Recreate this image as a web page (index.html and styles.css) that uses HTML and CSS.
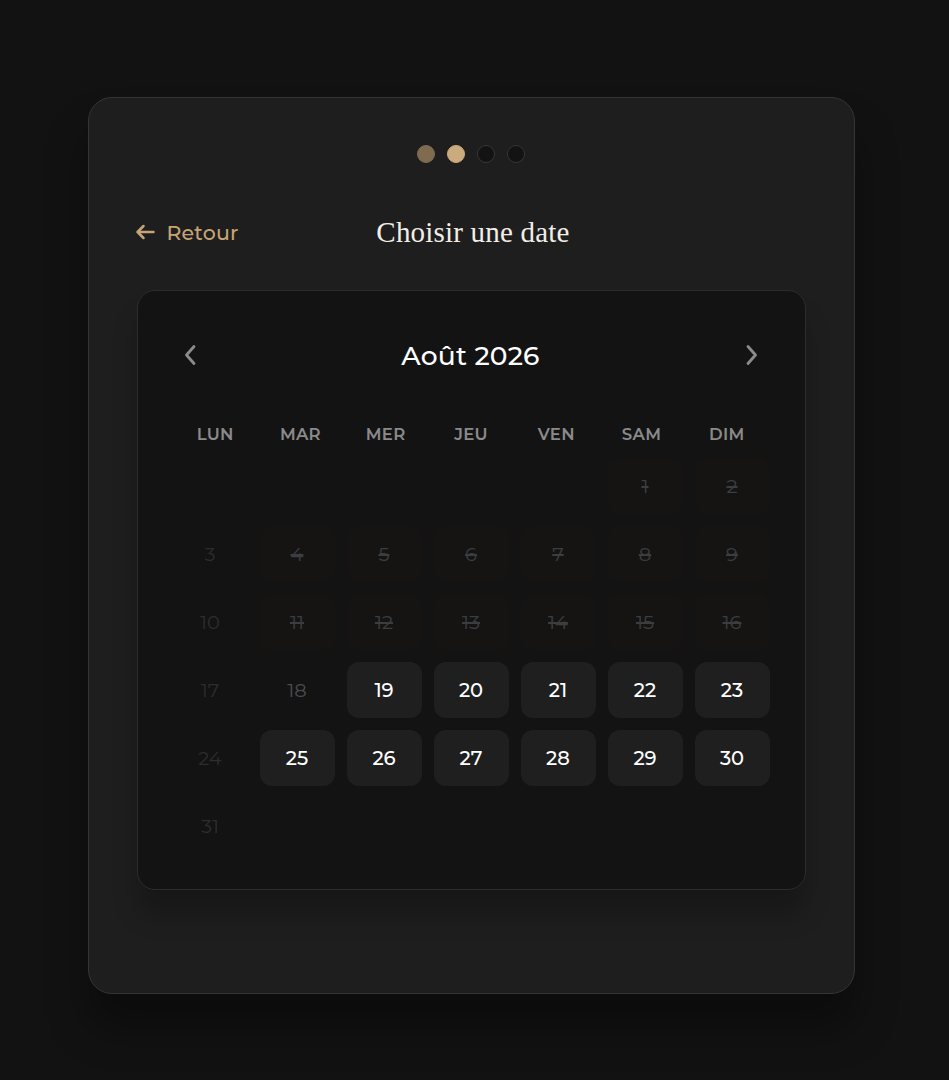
FILE: index.html
```html
<!DOCTYPE html>
<html lang="fr">
<head>
<meta charset="utf-8">
<title>Choisir une date</title>
<link rel="stylesheet" href="styles.css">
</head>
<body>
<main class="page">
  <section class="card">
    <div class="steps">
      <span class="dot done"></span>
      <span class="dot active"></span>
      <span class="dot"></span>
      <span class="dot"></span>
    </div>
    <header class="head">
      <a class="back" href="#">
        <svg class="back-icon" viewBox="0 0 20 16" width="20" height="16" aria-hidden="true">
          <path d="M18.5 8H2.5M8.5 2L2.5 8l6 6" fill="none" stroke="currentColor" stroke-width="2.5" stroke-linecap="round" stroke-linejoin="round"/>
        </svg>
        <span>Retour</span>
      </a>
      <h1 class="title">Choisir une date</h1>
      <span class="spacer"></span>
    </header>
    <div class="calendar">
      <div class="cal-head">
        <button class="nav" aria-label="Mois précédent">
          <svg viewBox="0 0 14 24" width="14" height="24"><path d="M11 3.5L3.5 12l7.5 8.5" fill="none" stroke="currentColor" stroke-width="2.8" stroke-linecap="round" stroke-linejoin="round"/></svg>
        </button>
        <div class="month">Août 2026</div>
        <button class="nav" aria-label="Mois suivant">
          <svg viewBox="0 0 14 24" width="14" height="24"><path d="M3 3.5l7.5 8.5L3 20.5" fill="none" stroke="currentColor" stroke-width="2.8" stroke-linecap="round" stroke-linejoin="round"/></svg>
        </button>
      </div>
      <div class="weekdays">
        <span>LUN</span><span>MAR</span><span>MER</span><span>JEU</span><span>VEN</span><span>SAM</span><span>DIM</span>
      </div>
      <div class="days">
        <span class="day empty"></span>
        <span class="day empty"></span>
        <span class="day empty"></span>
        <span class="day empty"></span>
        <span class="day empty"></span>
        <span class="day off">1</span>
        <span class="day off">2</span>

        <span class="day past">3</span>
        <span class="day off">4</span>
        <span class="day off">5</span>
        <span class="day off">6</span>
        <span class="day off">7</span>
        <span class="day off">8</span>
        <span class="day off">9</span>

        <span class="day past">10</span>
        <span class="day off">11</span>
        <span class="day off">12</span>
        <span class="day off">13</span>
        <span class="day off">14</span>
        <span class="day off">15</span>
        <span class="day off">16</span>

        <span class="day past">17</span>
        <span class="day closed">18</span>
        <span class="day open">19</span>
        <span class="day open">20</span>
        <span class="day open">21</span>
        <span class="day open">22</span>
        <span class="day open">23</span>

        <span class="day past">24</span>
        <span class="day open">25</span>
        <span class="day open">26</span>
        <span class="day open">27</span>
        <span class="day open">28</span>
        <span class="day open">29</span>
        <span class="day open">30</span>

        <span class="day past">31</span>
      </div>
    </div>
  </section>
</main>
</body>
</html>
```

FILE: styles.css
```css
* { box-sizing: border-box; }

html, body {
  margin: 0;
  padding: 0;
  background: #121212;
}

body {
  font-family: "Montserrat", "Inter", "DejaVu Sans", sans-serif;
  color: #ffffff;
}

.page {
  display: flex;
  justify-content: center;
  padding: 97px 7px 0 0;
  min-height: 1080px;
}

.card {
  width: 767px;
  height: 897px;
  background: #1e1e1e;
  border: 1px solid #353535;
  border-radius: 24px;
  padding: 47px 48px 0 48px;
  box-shadow: 0 34px 40px rgba(0, 0, 0, 0.35);
}

.steps {
  display: flex;
  justify-content: center;
  gap: 12px;
  height: 18px;
}

.dot {
  width: 18px;
  height: 18px;
  border-radius: 50%;
  background: #131313;
  border: 1px solid #363636;
}

.dot.done {
  background: #7f6c50;
  border-color: #7f6c50;
}

.dot.active {
  background: #cbab7d;
  border-color: #cbab7d;
}

.head {
  display: grid;
  grid-template-columns: 1fr auto 1fr;
  align-items: center;
  height: 40px;
  margin-top: 49px;
}

.back {
  display: flex;
  align-items: center;
  gap: 12px;
  color: #c6a475;
  text-decoration: none;
  font-size: 20.5px;
  font-weight: 500;
  letter-spacing: 0.2px;
  justify-self: start;
  margin-left: -2px;
}

.back-icon {
  display: block;
}

.title {
  margin: 0;
  font-family: "Liberation Serif", "DejaVu Serif", serif;
  font-weight: 400;
  font-size: 29px;
  color: #f2eee7;
  letter-spacing: 0.2px;
  transform: translateX(2px);
}

.calendar {
  margin-top: 38px;
  background: #131313;
  border: 1px solid #2c2c2c;
  border-radius: 18px;
  padding: 35px;
  box-shadow: 0 26px 24px rgba(0, 0, 0, 0.22);
}

.cal-head {
  display: flex;
  align-items: center;
  justify-content: space-between;
  height: 58px;
  padding: 0 11px 0 10px;
}

.nav {
  background: none;
  border: 0;
  padding: 0;
  color: #8c8c8c;
  display: flex;
  cursor: pointer;
}

.month {
  font-size: 26.5px;
  font-weight: 500;
  letter-spacing: 0.2px;
  color: #ffffff;
}

.weekdays {
  display: grid;
  grid-template-columns: repeat(7, 1fr);
  margin-top: 39px;
  margin-bottom: 15px;
  height: 20px;
  line-height: 22px;
  text-align: center;
  font-size: 16.5px;
  font-weight: 600;
  color: #8a8a8a;
  letter-spacing: 0.3px;
}

.days {
  display: grid;
  grid-template-columns: repeat(7, 1fr);
  grid-auto-rows: 56px;
  gap: 12px;
}

.day {
  display: flex;
  align-items: center;
  justify-content: center;
  border-radius: 12px;
  font-size: 19.5px;
}

.day.off {
  background: #161413;
  color: #3a3e41;
  text-decoration: line-through;
  text-decoration-thickness: 1.5px;
}

.day.past {
  color: #2d2d2d;
}

.day.closed {
  color: #4c4c4c;
}

.day.open {
  background: #1f1f1f;
  color: #ffffff;
  font-weight: 500;
}
```
